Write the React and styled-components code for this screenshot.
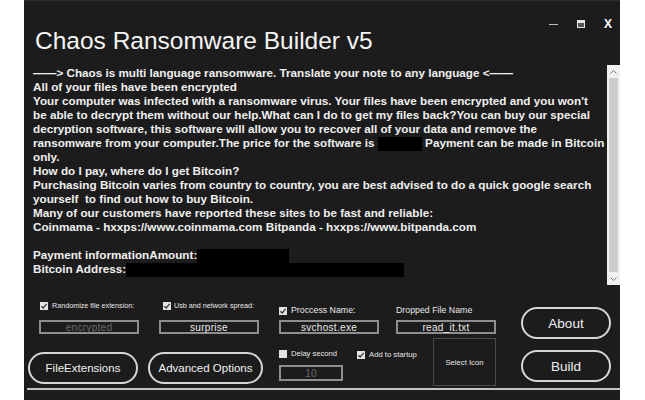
import styled, { createGlobalStyle } from "styled-components"

const GlobalStyle = createGlobalStyle`
  html, body {
    margin: 0;
    background: #ffffff;
  }
  body {
    font-family: "Liberation Sans", Arial, sans-serif;
  }
`

const Window = styled.div`
  margin-left: 24px;
  width: 596px;
  height: 400px;
  box-sizing: border-box;
  background: #1c1c1c;
  border-top: 1px solid #2e2e2e;
  color: #f2f2f2;
  display: flex;
  flex-direction: column;
  overflow: hidden;
`

const Header = styled.header`
  height: 64px;
  box-sizing: border-box;
  padding: 18px 8px 0 11px;
  display: flex;
  align-items: flex-start;
`

const Title = styled.h1`
  margin: 8px 0 0;
  font-size: 24.5px;
  line-height: 28px;
  font-weight: 400;
  color: #f5f5f5;
`

const Controls = styled.div`
  margin-left: auto;
  height: 10px;
  display: flex;
  align-items: center;
  gap: 19px;
`

const Minimize = styled.span`
  width: 9px;
  height: 1px;
  background: #bdbdbd;
`

const Maximize = styled.span`
  width: 8px;
  height: 8px;
  box-sizing: border-box;
  border: 1.5px solid #e6e6e6;
  border-top-width: 3px;
  background: #555;
`

const Close = styled.span`
  font-size: 12px;
  font-weight: 700;
  line-height: 10px;
  color: #ffffff;
`

const NoteArea = styled.div`
  height: 220px;
  margin-left: 6px;
  display: flex;
`

const NoteText = styled.div`
  flex: 1;
  padding: 1px 0 0 3px;
  font-size: 11.7px;
  font-weight: 700;
  line-height: 14px;
  white-space: pre;
  overflow: hidden;
  color: #f0f0f0;
`

const NoteLine = styled.div`
  height: 14px;
`

const Redacted = styled.span`
  display: inline-block;
  width: ${p => p.$w}px;
  height: 14px;
  background: #000;
  vertical-align: -4px;
`

const Scrollbar = styled.div`
  width: 13px;
  background: #f0f0f0;
  display: flex;
  flex-direction: column;
`

const ScrollArrow = styled.div`
  height: 13px;
  display: flex;
  align-items: center;
  justify-content: center;
`

const ScrollThumb = styled.div`
  flex: 1;
  margin: 0 2px;
  background: #cdcdcd;
`

const BottomPanel = styled.div`
  height: 103px;
  padding-left: 4px;
  display: flex;
`

const OptionsGrid = styled.div`
  display: grid;
  grid-template-columns: 120px 131px 117px 100px;
  grid-template-rows: 33px 17px 53px;
`

const OptionLabel = styled.label`
  align-self: ${p => p.$align || "end"};
  display: flex;
  align-items: center;
  gap: ${p => p.$gap ?? 4}px;
  margin: ${p => p.$top || 0}px 0 ${p => p.$lift || 0}px ${p => p.$inset || 0}px;
  font-size: ${p => p.$size || 7.2}px;
  line-height: 11px;
  color: #e8e8e8;
  white-space: nowrap;
`

const Box = styled.span`
  width: 8px;
  height: 8px;
  flex: none;
  background: #e4e4e4;
  display: flex;
  align-items: center;
  justify-content: center;
`

const TextBox = styled.div`
  width: ${p => p.$w || 100}px;
  height: ${p => p.$h || 14}px;
  margin: 2px 0 0 ${p => p.$inset || 0}px;
  box-sizing: border-box;
  border: 2px solid #8e8e8e;
  display: flex;
  align-items: center;
  justify-content: center;
  font-size: 10px;
  letter-spacing: 0.3px;
  color: ${p => (p.$muted ? "#6b6b6b" : "#eaeaea")};
`

const PillButton = styled.button`
  width: ${p => p.$w}px;
  height: 32px;
  margin-top: ${p => p.$top ?? 17}px;
  box-sizing: border-box;
  border: 2px solid #d6d6d6;
  border-radius: 16px;
  background: transparent;
  color: #f0f0f0;
  font-family: "Liberation Sans", Arial, sans-serif;
  font-size: ${p => p.$size || 11.5}px;
  padding: 0;
`

const StartupRow = styled.div`
  grid-column: 3 / 5;
  display: flex;
  align-items: flex-start;
`

const DelayGroup = styled.div`
  margin-top: 13px;
  display: flex;
  flex-direction: column;
  align-items: flex-start;
  gap: 4px;
`

const SelectIcon = styled.div`
  margin: 3px 0 0 auto;
  width: 63px;
  height: 48px;
  box-sizing: border-box;
  border: 1px solid #4a4a4a;
  display: flex;
  align-items: center;
  justify-content: center;
  font-size: 7.7px;
  color: #e8e8e8;
`

const ActionColumn = styled.div`
  margin-left: 25px;
  padding-top: 22px;
  display: flex;
  flex-direction: column;
  gap: 11px;
`

const Divider = styled.div`
  height: 2px;
  margin-left: 3px;
  background: #c4c4c4;
`

const Check = ({ checked }) => (
  <Box>
    {checked && (
      <svg width="8" height="8" viewBox="0 0 8 8">
        <path d="M1.4 4.2 L3.2 6 L6.7 1.9" fill="none" stroke="#3a3a3a" strokeWidth="1.3" />
      </svg>
    )}
  </Box>
)

const Chevron = ({ down }) => (
  <svg width="7" height="4" viewBox="0 0 7 4">
    <path d={down ? "M0.5 0.5 L3.5 3.5 L6.5 0.5" : "M0.5 3.5 L3.5 0.5 L6.5 3.5"} fill="none" stroke="#7a7a7a" strokeWidth="1" />
  </svg>
)

const note = [
  "——> Chaos is multi language ransomware. Translate your note to any language <——",
  "All of your files have been encrypted",
  "Your computer was infected with a ransomware virus. Your files have been encrypted and you won't",
  "be able to decrypt them without our help.What can I do to get my files back?You can buy our special",
  "decryption software, this software will allow you to recover all of your data and remove the",
]

const App = () => (
  <>
    <GlobalStyle />
    <Window>
      <Header>
        <Title>Chaos Ransomware Builder v5</Title>
        <Controls>
          <Minimize />
          <Maximize />
          <Close>X</Close>
        </Controls>
      </Header>

      <NoteArea>
        <NoteText>
          {note.map((line, i) => (
            <NoteLine key={i}>{line}</NoteLine>
          ))}
          <NoteLine>
            ransomware from your computer.The price for the software is <Redacted $w={44} /> Payment can be made in Bitcoin
          </NoteLine>
          <NoteLine>only.</NoteLine>
          <NoteLine>How do I pay, where do I get Bitcoin?</NoteLine>
          <NoteLine>Purchasing Bitcoin varies from country to country, you are best advised to do a quick google search</NoteLine>
          <NoteLine>yourself  to find out how to buy Bitcoin.</NoteLine>
          <NoteLine>Many of our customers have reported these sites to be fast and reliable:</NoteLine>
          <NoteLine>Coinmama - hxxps://www.coinmama.com Bitpanda - hxxps://www.bitpanda.com</NoteLine>
          <NoteLine />
          <NoteLine>
            Payment informationAmount:<Redacted $w={92} />
          </NoteLine>
          <NoteLine>
            Bitcoin Address:<Redacted $w={278} />
          </NoteLine>
        </NoteText>
        <Scrollbar>
          <ScrollArrow>
            <Chevron />
          </ScrollArrow>
          <ScrollThumb />
          <ScrollArrow>
            <Chevron down />
          </ScrollArrow>
        </Scrollbar>
      </NoteArea>

      <BottomPanel>
        <OptionsGrid>
          <OptionLabel $inset={12} $lift={7}>
            <Check checked />
            Randomize file extension:
          </OptionLabel>
          <OptionLabel $inset={15} $gap={3} $lift={7}>
            <Check checked />
            Usb and network spread:
          </OptionLabel>
          <OptionLabel $size={8.8} $lift={2}>
            <Check checked />
            Proccess Name:
          </OptionLabel>
          <OptionLabel $size={8.8} $lift={2}>
            Dropped File Name
          </OptionLabel>

          <TextBox $inset={11} $muted>encrypted</TextBox>
          <TextBox $inset={11}>surprise</TextBox>
          <TextBox>svchost.exe</TextBox>
          <TextBox>read_it.txt</TextBox>

          <PillButton $w={110}>FileExtensions</PillButton>
          <PillButton $w={115}>Advanced Options</PillButton>
          <StartupRow>
            <DelayGroup>
              <OptionLabel $size={7.6} $align="flex-start">
                <Check />
                Delay second
              </OptionLabel>
              <TextBox $w={64} $h={16} $muted>10</TextBox>
            </DelayGroup>
            <OptionLabel $size={7.7} $inset={14} $top={14} $align="flex-start">
              <Check checked />
              Add to startup
            </OptionLabel>
            <SelectIcon>Select Icon</SelectIcon>
          </StartupRow>
        </OptionsGrid>

        <ActionColumn>
          <PillButton $w={90} $size={13.5} $top={0}>About</PillButton>
          <PillButton $w={90} $size={13.5} $top={0}>Build</PillButton>
        </ActionColumn>
      </BottomPanel>

      <Divider />
    </Window>
  </>
)

export default App
